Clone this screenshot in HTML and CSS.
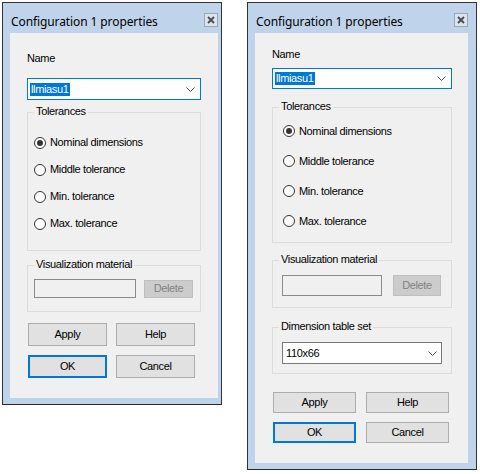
FILE: index.html
```html
<!DOCTYPE html>
<html>
<head>
<meta charset="utf-8">
<link rel="stylesheet" href="styles.css">
</head>
<body>
<div class="win win-a">
  <div class="titlebar">
    <span class="title">Configuration 1 properties</span>
    <span class="close"><svg width="8" height="8" viewBox="0 0 8 8"><path d="M1 1L7 7M7 1L1 7" stroke="#4a4a4a" stroke-width="1.8"/></svg></span>
  </div>
  <div class="client">
    <div class="label">Name</div>
    <div class="combo focus"><span class="sel">llmiasu1</span><svg class="chev" width="9" height="5" viewBox="0 0 9 5"><path d="M0.5 0.5L4.5 4.5L8.5 0.5" fill="none" stroke="#555" stroke-width="1"/></svg></div>
    <div class="group tol">
      <span class="legend">Tolerances</span>
      <div class="radio"><span class="dot on"></span><span>Nominal dimensions</span></div>
      <div class="radio"><span class="dot"></span><span>Middle tolerance</span></div>
      <div class="radio"><span class="dot"></span><span>Min. tolerance</span></div>
      <div class="radio"><span class="dot"></span><span>Max. tolerance</span></div>
    </div>
    <div class="group vis">
      <span class="legend">Visualization material</span>
      <div class="tbox"></div>
      <div class="btn dis">Delete</div>
    </div>
    <div class="btns">
      <div class="btn">Apply</div>
      <div class="btn">Help</div>
      <div class="btn def">OK</div>
      <div class="btn">Cancel</div>
    </div>
  </div>
</div>

<div class="win win-b">
  <div class="titlebar">
    <span class="title">Configuration 1 properties</span>
    <span class="close"><svg width="8" height="8" viewBox="0 0 8 8"><path d="M1 1L7 7M7 1L1 7" stroke="#4a4a4a" stroke-width="1.8"/></svg></span>
  </div>
  <div class="client">
    <div class="label">Name</div>
    <div class="combo focus"><span class="sel">llmiasu1</span><svg class="chev" width="9" height="5" viewBox="0 0 9 5"><path d="M0.5 0.5L4.5 4.5L8.5 0.5" fill="none" stroke="#555" stroke-width="1"/></svg></div>
    <div class="group tol">
      <span class="legend">Tolerances</span>
      <div class="radio"><span class="dot on"></span><span>Nominal dimensions</span></div>
      <div class="radio"><span class="dot"></span><span>Middle tolerance</span></div>
      <div class="radio"><span class="dot"></span><span>Min. tolerance</span></div>
      <div class="radio"><span class="dot"></span><span>Max. tolerance</span></div>
    </div>
    <div class="group vis">
      <span class="legend">Visualization material</span>
      <div class="tbox"></div>
      <div class="btn dis">Delete</div>
    </div>
    <div class="group dim">
      <span class="legend">Dimension table set</span>
      <div class="combo plain"><span class="val">110x66</span><svg class="chev" width="9" height="5" viewBox="0 0 9 5"><path d="M0.5 0.5L4.5 4.5L8.5 0.5" fill="none" stroke="#555" stroke-width="1"/></svg></div>
    </div>
    <div class="btns">
      <div class="btn">Apply</div>
      <div class="btn">Help</div>
      <div class="btn def">OK</div>
      <div class="btn">Cancel</div>
    </div>
  </div>
</div>
</body>
</html>
```

FILE: styles.css
```css
* { box-sizing: border-box; margin: 0; padding: 0; }
html, body { background: #ffffff; }
body {
  margin: 0;
  width: 480px;
  height: 474px;
  position: relative;
  overflow: hidden;
  font-family: "Liberation Sans", Arial, sans-serif;
  font-size: 11px;
  letter-spacing: -0.35px;
  color: #000;
}

.win {
  position: absolute;
  display: flex;
  flex-direction: column;
  border: 1px solid #333333;
  border-bottom-color: #2a2a2a;
  background: #bfd4eb;
}
.win-a { left: 2px; top: 2px; width: 220px; height: 403px; padding: 0 3px 6px 7px; }
.win-b { left: 247px; top: 2px; width: 230px; height: 468px; padding: 0 8px 6px 7px; }

.titlebar {
  height: 30px;
  flex: none;
  display: flex;
  align-items: flex-start;
  justify-content: space-between;
}
.title {
  font-family: "Noto Sans", sans-serif;
  font-size: 12px;
  line-height: 16px;
  letter-spacing: -0.1px;
  margin: 11px 0 0 1px;
  color: #000;
}
.close {
  width: 14px;
  height: 14px;
  margin-top: 10px;
  border: 1px solid #9aa7b6;
  background: #d9e4ef;
  display: flex;
  align-items: center;
  justify-content: center;
}

.client {
  flex: 1;
  background: #f0f0f0;
  display: flex;
  flex-direction: column;
  align-items: flex-start;
}
.win-a .client { padding: 19px 17px 0 17px; }
.win-b .client { padding: 15px 16px 0 17px; }

.label { line-height: 13px; height: 13px; }

.combo {
  display: flex;
  align-items: center;
  justify-content: space-between;
  background: #fff;
  border: 1px solid #7a7a7a;
  padding: 0 5px 0 2px;
  width: 100%;
}
.combo.focus { border-color: #0078d7; }
.sel {
  background: #0078d7;
  color: #fff;
  line-height: 13px;
  padding: 0 1px;
}
.val { line-height: 13px; padding-left: 1px; }
.chev { flex: none; }

.win-a .combo.focus { height: 22px; margin-top: 13px; }
.win-b .combo.focus { height: 21px; margin-top: 7px; }

.group {
  position: relative;
  border: 1px solid #dcdcdc;
  width: 100%;
}
.legend {
  position: absolute;
  left: 6px;
  top: -8px;
  padding: 0 2px;
  line-height: 13px;
  background: #f0f0f0;
}

.radio {
  display: flex;
  align-items: center;
  gap: 4px;
  line-height: 13px;
}
.dot {
  width: 12px;
  height: 12px;
  border: 1px solid #333;
  border-radius: 50%;
  background: #fff;
  display: flex;
  align-items: center;
  justify-content: center;
  flex: none;
}
.dot.on::after {
  content: "";
  width: 6px;
  height: 6px;
  border-radius: 50%;
  background: #333;
}

.win-a .tol { margin-top: 12px; height: 139px; padding: 16px 0 0 6px; }
.win-a .radio { height: 27px; }
.win-b .tol { margin-top: 18px; height: 136px; padding: 8px 0 0 10px; }
.win-b .radio { height: 30px; }

.vis { display: flex; align-items: center; }
.tbox {
  border: 1px solid #8a8a8a;
  background: #f0f0f0;
  flex: none;
}
.btn {
  display: flex;
  align-items: center;
  justify-content: center;
  background: #e1e1e1;
  border: 1px solid #adadad;
  line-height: 13px;
}
.btn.dis {
  background: #cccccc;
  border-color: #bfbfbf;
  color: #838383;
}
.btn.def { border: 2px solid #0078d7; }

.win-a .vis { margin-top: 14px; height: 47px; padding: 0 6px; }
.win-a .tbox { width: 102px; height: 19px; }
.win-a .vis .btn { width: 49px; height: 18px; margin-left: 8px; }

.win-b .vis { margin-top: 17px; height: 48px; padding: 2px 9px 0; }
.win-b .tbox { width: 100px; height: 21px; }
.win-b .vis .btn { width: 48px; height: 21px; margin-left: 11px; }

.win-b .dim { margin-top: 19px; height: 47px; padding: 14px 9px 0; }
.win-b .dim .combo { width: 160px; height: 22px; padding-right: 4px; }

.btns {
  display: grid;
  margin-left: 1px;
}
.win-a .btns { margin-top: 11px; grid-template-columns: 79px 79px; grid-auto-rows: 23px; gap: 9px; }
.win-b .btns { margin-top: 18px; grid-template-columns: 83px 83px; grid-auto-rows: 21px; gap: 9px 10px; }
```
